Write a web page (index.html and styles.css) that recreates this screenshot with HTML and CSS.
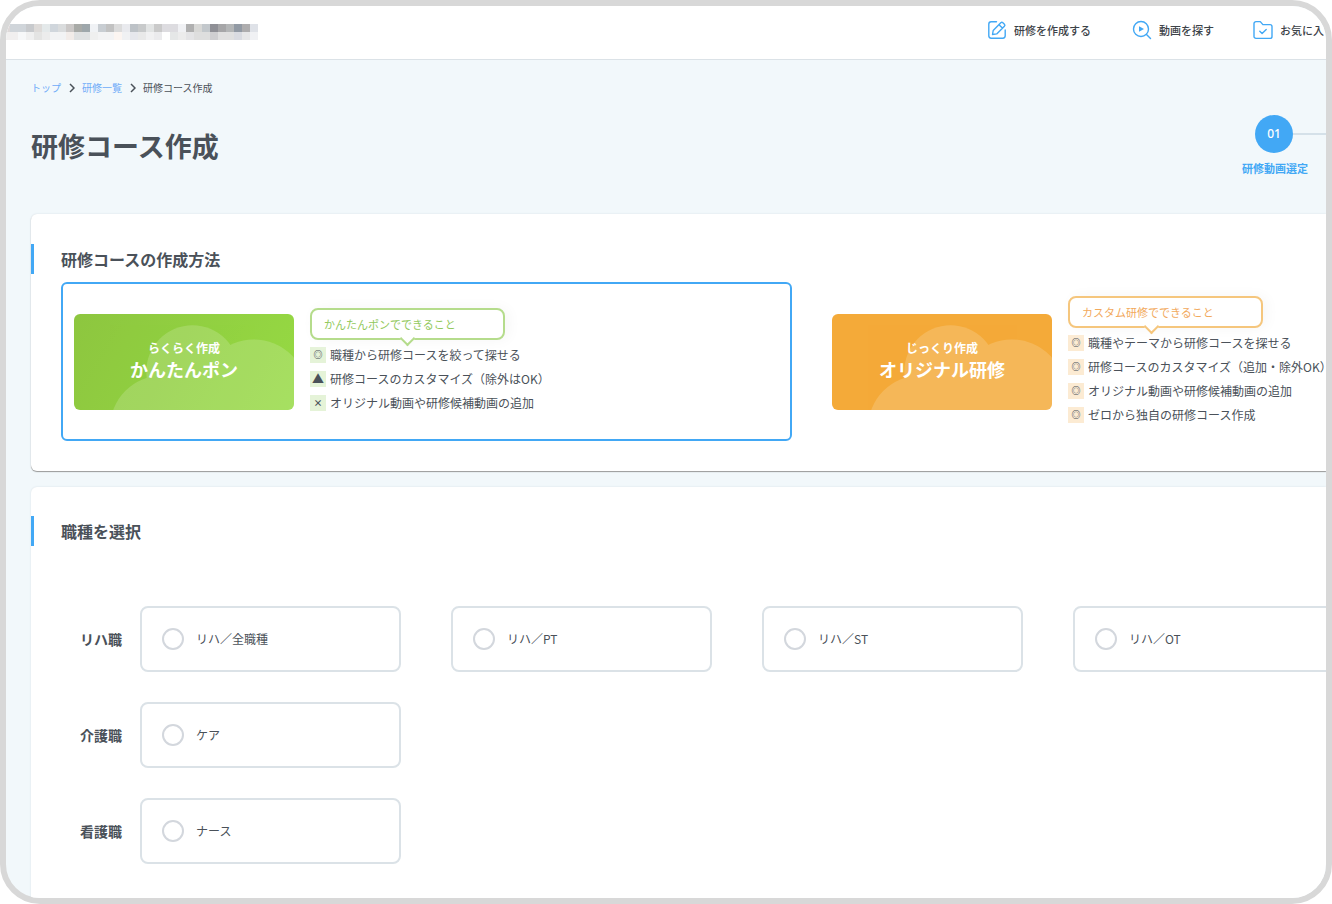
FILE: index.html
```html
<!DOCTYPE html>
<html lang="ja">
<head>
<meta charset="utf-8">
<title>研修コース作成</title>
<link rel="stylesheet" href="styles.css">
</head>
<body>
<div class="frame">
  <header class="header">
    <svg class="logo" width="256" height="16" viewBox="0 0 256 16" shape-rendering="crispEdges" aria-hidden="true">
      <path fill="#ddd8d8" d="M0 0h8v8H0z"/><path fill="#d0d5da" d="M8 0h16v8H8z"/><path fill="#c8cacd" d="M24 0h8v8h-8z"/><path fill="#dedbd9" d="M32 0h8v8h-8z"/><path fill="#e4e9ea" d="M40 0h8v8h-8z"/><path fill="#d0d6dc" d="M48 0h8v8h-8z"/><path fill="#dadcdd" d="M56 0h8v8h-8z"/><path fill="#cbc8c7" d="M64 0h8v8h-8z"/><path fill="#a8aaa7" d="M72 0h8v8h-8z"/><path fill="#9ea7ab" d="M80 0h8v8h-8z"/><path fill="#f0f2f5" d="M88 0h8v8h-8z"/><path fill="#c8cdd2" d="M96 0h8v8h-8z"/><path fill="#c2c2c2" d="M104 0h8v8h-8z"/><path fill="#dcdcdc" d="M112 0h8v8h-8z"/><path fill="#e9eaee" d="M120 0h8v8h-8z"/><path fill="#bdc2c7" d="M128 0h8v8h-8z"/><path fill="#c8cacb" d="M136 0h8v8h-8z"/><path fill="#e2e4e4" d="M144 0h8v8h-8z"/><path fill="#cacaca" d="M152 0h8v8h-8z"/><path fill="#dddce0" d="M160 0h16v8h-16z"/><path fill="#f0f1f4" d="M176 0h8v8h-8z"/><path fill="#b0b0b0" d="M184 0h8v8h-8z"/><path fill="#d8d8d6" d="M192 0h8v8h-8z"/><path fill="#c3c8cc" d="M200 0h8v8h-8z"/><path fill="#8f9096" d="M208 0h8v8h-8z"/><path fill="#a6a6a8" d="M216 0h8v8h-8z"/><path fill="#b4b6b7" d="M224 0h8v8h-8z"/><path fill="#929aa4" d="M232 0h8v8h-8z"/><path fill="#aeadae" d="M240 0h8v8h-8z"/><path fill="#dfe2e8" d="M248 0h8v8h-8z"/>
      <path fill="#f1efef" d="M0 8h16v8H0z"/><path fill="#f7f8f9" d="M16 8h8v8h-8z"/><path fill="#f0f0f0" d="M24 8h8v8h-8z"/><path fill="#e4e4e3" d="M32 8h8v8h-8z"/><path fill="#ececec" d="M40 8h8v8h-8z"/><path fill="#f2f3f4" d="M48 8h16v8H48z"/><path fill="#f2ece9" d="M64 8h8v8h-8z"/><path fill="#dfe1e2" d="M72 8h16v8H72z"/><path fill="#efefef" d="M88 8h8v8h-8z"/><path fill="#f3f3f4" d="M96 8h16v8H96z"/><path fill="#fcf5f1" d="M112 8h8v8h-8z"/><path fill="#f0f1f3" d="M120 8h8v8h-8z"/><path fill="#e6e7ec" d="M128 8h8v8h-8z"/><path fill="#e9e9e9" d="M136 8h8v8h-8z"/><path fill="#f1f1f2" d="M144 8h8v8h-8z"/><path fill="#ebebed" d="M152 8h8v8h-8z"/><path fill="#e5e7e7" d="M168 8h8v8h-8z"/><path fill="#ececec" d="M176 8h8v8h-8z"/><path fill="#e4e4e6" d="M184 8h8v8h-8z"/><path fill="#dedede" d="M192 8h16v8h-16z"/><path fill="#cfcfd1" d="M208 8h8v8h-8z"/><path fill="#e0e0e0" d="M216 8h16v8h-16z"/><path fill="#d9dbe1" d="M232 8h8v8h-8z"/><path fill="#e7e7e8" d="M240 8h8v8h-8z"/><path fill="#f0f1f4" d="M248 8h8v8h-8z"/>
    </svg>
    <nav class="nav">
      <a class="nav-link nav-create" href="#">
        <svg class="nav-icon" viewBox="0 0 20 20"><path d="M9.500 1.800H4.200a2.400 2.400 0 0 0-2.400 2.400v11.600a2.400 2.400 0 0 0 2.400 2.400h11.600a2.400 2.400 0 0 0 2.400-2.400V10"/><path d="M5.500 14.500l.7-4 7.600-7.800a1.500 1.500 0 0 1 2.100 0l1.500 1.500a1.500 1.500 0 0 1 0 2.100l-7.700 7.600-4.200.6zM12 4.700l3.400 3.400"/></svg>
        研修を作成する
      </a>
      <a class="nav-link nav-search" href="#">
        <svg class="nav-icon" viewBox="0 0 20 20"><circle cx="9" cy="9" r="7.500"/><path d="M14.500 14.500l4 4"/><path class="solid" d="M7 6.200v5.600L12 9z"/></svg>
        動画を探す
      </a>
      <a class="nav-link" href="#">
        <svg class="nav-icon" viewBox="0 0 20 20"><path d="M1 3.600a2 2 0 0 1 2-2h4.300l2.600 3H17a2 2 0 0 1 2 2v9.800a2 2 0 0 1-2 2H3a2 2 0 0 1-2-2z"/><path d="M6.800 11.200l2.300 2.200 4.100-4"/></svg>
        お気に入
      </a>
    </nav>
  </header>

  <main class="main">
    <ol class="breadcrumb">
      <li><a href="#">トップ</a></li>
      <li><svg class="chevron" viewBox="0 0 6 10"><path d="M1 1l4 4-4 4"/></svg><a href="#">研修一覧</a></li>
      <li><svg class="chevron" viewBox="0 0 6 10"><path d="M1 1l4 4-4 4"/></svg><span>研修コース作成</span></li>
    </ol>

    <div class="title-row">
      <h1 class="title">研修コース作成</h1>
      <div class="step">
        <div class="step-track"><span class="step-number">01</span></div>
        <span class="step-label">研修動画選定</span>
      </div>
    </div>

    <section class="card card-method">
      <h2 class="card-title">研修コースの作成方法</h2>
      <div class="methods">
        <button class="method selected" type="button">
          <span class="banner banner-easy">
            <svg class="cloud" viewBox="0 0 219 95"><g><circle cx="118" cy="57" r="46"/><circle cx="179" cy="78" r="53"/><circle cx="88" cy="113" r="52"/></g></svg>
            <span class="banner-sub">らくらく作成</span>
            <span class="banner-main">かんたんポン</span>
          </span>
          <span class="detail easy">
            <span class="balloon">かんたんポンでできること</span>
            <span class="point"><span class="mark">◎</span>職種から研修コースを絞って探せる</span>
            <span class="point"><span class="mark triangle">▲</span>研修コースのカスタマイズ（除外はOK）</span>
            <span class="point"><span class="mark">×</span>オリジナル動画や研修候補動画の追加</span>
          </span>
        </button>
        <button class="method" type="button">
          <span class="banner banner-custom">
            <svg class="cloud" viewBox="0 0 219 95"><g><circle cx="118" cy="57" r="46"/><circle cx="179" cy="78" r="53"/><circle cx="88" cy="113" r="52"/></g></svg>
            <span class="banner-sub">じっくり作成</span>
            <span class="banner-main">オリジナル研修</span>
          </span>
          <span class="detail custom">
            <span class="balloon">カスタム研修でできること</span>
            <span class="point"><span class="mark">◎</span>職種やテーマから研修コースを探せる</span>
            <span class="point"><span class="mark">◎</span>研修コースのカスタマイズ（追加・除外OK）</span>
            <span class="point"><span class="mark">◎</span>オリジナル動画や研修候補動画の追加</span>
            <span class="point"><span class="mark">◎</span>ゼロから独自の研修コース作成</span>
          </span>
        </button>
      </div>
    </section>

    <section class="card card-jobs">
      <h2 class="card-title">職種を選択</h2>
      <div class="jobs">
        <div class="job-row" role="group" aria-labelledby="g1">
          <span class="job-group" id="g1">リハ職</span>
          <label class="job"><input type="radio" name="job">リハ／全職種</label>
          <label class="job"><input type="radio" name="job">リハ／PT</label>
          <label class="job"><input type="radio" name="job">リハ／ST</label>
          <label class="job"><input type="radio" name="job">リハ／OT</label>
        </div>
        <div class="job-row" role="group" aria-labelledby="g2">
          <span class="job-group" id="g2">介護職</span>
          <label class="job"><input type="radio" name="job">ケア</label>
        </div>
        <div class="job-row" role="group" aria-labelledby="g3">
          <span class="job-group" id="g3">看護職</span>
          <label class="job"><input type="radio" name="job">ナース</label>
        </div>
      </div>
    </section>
  </main>
</div>
</body>
</html>
```

FILE: styles.css
```css
* {
  box-sizing: border-box;
}

body {
  margin: 0;
  background: #fff;
  color: #4a5159;
  font-family: "Noto Sans CJK JP", sans-serif;
  font-size: 12px;
  line-height: 16px;
}

a {
  color: inherit;
  text-decoration: none;
}

button {
  font: inherit;
  color: inherit;
}

.frame {
  display: flex;
  flex-direction: column;
  height: 100vh;
  overflow: hidden;
  border: 6px solid #d8d8d8;
  border-radius: 40px;
  background: #f2f8fb;
}

/* Header */
.header {
  display: flex;
  flex: none;
  align-items: flex-start;
  justify-content: space-between;
  padding: 14px 2px 19px 0;
  border-bottom: 1px solid #dbe2e7;
  background: #fff;
}

.logo {
  flex: none;
  margin: 4px 0 0 -4px;
}

.nav {
  display: flex;
  color: #3c4248;
  font-size: 11px;
  font-weight: 500;
  line-height: 20px;
  white-space: nowrap;
}

.nav-link {
  display: flex;
  gap: 7px;
}

.nav-create {
  margin-right: 41px;
}

.nav-search {
  margin-right: 39px;
}

.nav-icon {
  width: 20px;
  height: 20px;
  fill: none;
  stroke: #42a8f5;
  stroke-width: 1.4;
  stroke-linecap: round;
  stroke-linejoin: round;
}

.nav-icon .solid {
  fill: #42a8f5;
  stroke: none;
}

/* Page heading */
.main {
  flex: 1;
  min-height: 0;
  padding: 20px 0 0 25px;
}

.breadcrumb {
  display: flex;
  gap: 8px;
  margin: 0;
  padding: 0;
  list-style: none;
  font-size: 10px;
}

.breadcrumb li {
  display: flex;
  align-items: center;
  gap: 7px;
}

.breadcrumb a {
  color: #6fabf8;
}

.chevron {
  width: 6px;
  height: 10px;
  fill: none;
  stroke: #4a5159;
  stroke-width: 1.5;
}

.title-row {
  display: flex;
  justify-content: space-between;
  margin-top: 19px;
}

.title {
  margin: 11px 0 0;
  font-size: 27px;
  line-height: 40px;
}

.step {
  display: flex;
  flex-direction: column;
  gap: 7px;
  width: 84px;
}

.step-track {
  display: flex;
  align-items: center;
  padding-left: 13px;
}

.step-track::after {
  content: "";
  flex: 1;
  height: 2px;
  background: #d5e1e9;
}

.step-number {
  width: 38px;
  border-radius: 50%;
  background: #42a8f5;
  color: #fff;
  font-family: "Noto Sans", sans-serif;
  font-weight: 500;
  line-height: 38px;
  text-align: center;
}

.step-label {
  color: #42a8f5;
  font-size: 11px;
  font-weight: 700;
}

/* Cards */
.card {
  border-radius: 6px 0 0 6px;
  background: #fff;
}

.card-method {
  margin-top: 38px;
  padding: 30px 0;
  box-shadow: 0 1px 1px #999, 0 0 2px #d5dde2;
}

.card-jobs {
  height: 100vh;
  margin-top: 16px;
  padding-top: 29px;
  box-shadow: 0 0 2px #d5dde2;
}

.card-title {
  margin: 0;
  padding-left: 27px;
  border-left: 3px solid #42a8f5;
  font-size: 16px;
  line-height: 30px;
}

.methods {
  display: flex;
  gap: 27px;
  margin: 8px 0 0 30px;
}

.method {
  display: flex;
  flex: 0 1 508px;
  align-items: center;
  gap: 16px;
  height: 159px;
  padding: 0 11px;
  border: 2px solid transparent;
  border-radius: 6px;
  background: #fff;
  text-align: left;
  white-space: nowrap;
}

.method.selected {
  flex: 0 0 731px;
  border-color: #42a8f5;
}

.banner {
  display: flex;
  position: relative;
  flex: none;
  flex-direction: column;
  align-items: center;
  width: 220px;
  height: 96px;
  padding-top: 26px;
  overflow: hidden;
  border-radius: 6px;
  color: #fff;
  font-weight: 700;
}

.banner-easy {
  background: linear-gradient(120deg, #8dc63f, #96da43);
}

.banner-custom {
  background: #f4aa39;
}

.cloud {
  position: absolute;
  inset: 0;
  width: 100%;
  height: 100%;
}

.cloud g {
  fill: #fff;
  opacity: 0.16;
}

.banner-sub,
.banner-main {
  position: relative;
}

.banner-main {
  font-size: 18px;
  line-height: 26px;
}

.detail {
  display: flex;
  flex-direction: column;
}

.balloon {
  position: relative;
  width: 195px;
  margin-bottom: 3px;
  padding-left: 12px;
  border: 2px solid;
  border-radius: 8px;
  background: #fff;
  box-shadow: 4px 0 14px #f6f6f6;
  font-size: 11px;
  line-height: 28px;
}

.balloon::after {
  content: "";
  position: absolute;
  bottom: -6px;
  left: 90px;
  width: 9px;
  height: 9px;
  border: solid;
  border-width: 0 2px 2px 0;
  background: #fff;
  transform: rotate(45deg);
}

.easy .balloon {
  border-color: #b5dc8c;
  color: #92c95c;
}

.easy .balloon::after {
  border-color: #b5dc8c;
}

.custom .balloon {
  border-color: #f5c67d;
  color: #f2a95c;
}

.custom .balloon::after {
  left: 76px;
  border-color: #f5c67d;
}

.point {
  display: flex;
  align-items: center;
  gap: 4px;
  line-height: 24px;
}

.mark {
  width: 16px;
  font-size: 9px;
  font-weight: 700;
  line-height: 16px;
  text-align: center;
}

.mark.triangle {
  font-size: 12px;
}

.easy .mark {
  background: #e5f3d8;
}

.custom .mark {
  background: #fcebd3;
}

/* Job selection */
.jobs {
  display: grid;
  gap: 30px;
  margin-top: 60px;
  padding-left: 49px;
}

.job-row {
  display: grid;
  grid-template-columns: 10px repeat(4, 261px);
  gap: 50px;
  align-items: center;
}

.job-group {
  font-size: 14px;
  font-weight: 700;
  white-space: nowrap;
}

.job {
  display: flex;
  align-items: center;
  gap: 12px;
  height: 66px;
  padding-left: 20px;
  border: 2px solid #dbe2e7;
  border-radius: 8px;
}

.job input {
  width: 22px;
  height: 22px;
  margin: 0;
  appearance: none;
  border: 2px solid #d3d7dd;
  border-radius: 50%;
  background: #fff;
}

.job input:checked {
  border: 6px solid #42a8f5;
}
```
